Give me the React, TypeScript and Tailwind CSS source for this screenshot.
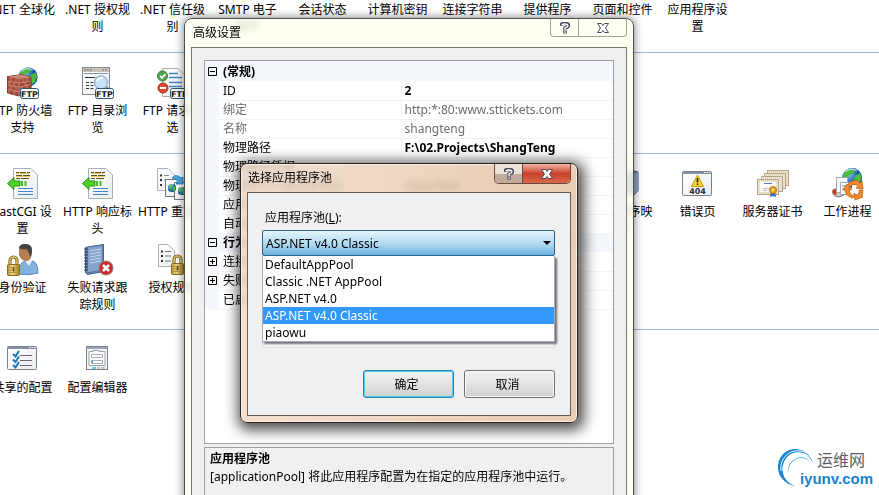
import { useState, type ReactNode } from "react";

const FtpBadge = () => (
  <g>
    <rect x="13.5" y="21.5" width="18" height="10" rx="2" fill="#f6fbff" stroke="#2f5870" />
    <text x="22.5" y="29.5" textAnchor="middle" fontSize="8" fontWeight="700" fill="#111" fontFamily="DejaVu Sans, sans-serif" textRendering="geometricPrecision">
      FTP
    </text>
  </g>
);

const Globe = ({ cx, cy, r }: { cx: number; cy: number; r: number }) => (
  <g transform={`translate(${cx} ${cy}) scale(${r / 10})`}>
    <circle r="10" fill="#1d6fd0" />
    <circle r="10" fill="url(#globeShine)" />
    <path d="M-8-5C-5-10 1-10 3-8L1-4-3-3-4 1-8 2-9-2ZM3-2 8-5 9.500 0 7 6 3 8 1 3ZM-5 4-1 5-1 9-4 8Z" fill="#4dbb3c" />
    <path d="M-7-6A9 9 0 0 1 5-7" stroke="#d7f0ff" strokeWidth="1.500" fill="none" opacity=".7" />
  </g>
);

const Lock = ({ x, y }: { x: number; y: number }) => (
  <g transform={`translate(${x} ${y})`}>
    <path d="M3 9V5a3.500 4 0 0 1 7 0v4" fill="none" stroke="#7f6418" strokeWidth="3.200" />
    <path d="M3 9V5a3.500 4 0 0 1 7 0v4" fill="none" stroke="#ddc271" strokeWidth="1.500" />
    <rect x=".5" y="8.500" width="12" height="11" rx="1" fill="url(#brass)" stroke="#8a6a1b" />
    <path d="M2 11.500h9M2 14h9M2 16.500h9" stroke="#b3913c" />
    <path d="M6.500 11.500v4" stroke="#5a430c" strokeWidth="1.500" />
  </g>
);

const Page = ({ x, y, w, h }: { x: number; y: number; w: number; h: number }) => (
  <g transform={`translate(${x} ${y})`}>
    <path d={`M.5.5H${w - 7}L${w - 0.5} 7V${h - 0.5}H.5Z`} fill="url(#paper)" stroke="#a9b0b6" />
    <path d={`M${w - 7}.5V7H${w - 0.5}Z`} fill="#e3e7ea" stroke="#a9b0b6" />
  </g>
);

const WindowFrame = ({ y, h }: { y: number; h: number }) => (
  <g>
    <rect x=".5" y={y + 0.5} width="29" height={h} rx="1" fill="url(#paper)" stroke="#7d8085" />
    <path d={`M1 ${y + 2}h28`} stroke="#8392ab" strokeWidth="2" />
    <path d={`M22 ${y + 1.5}h1.500m1 0h1.500m1 0h1.500`} stroke="#fff" />
  </g>
);

const ArrowPage = () => (
  <g>
    <Page x={6} y={0} w={25} h={31} />
    <path d="M9 4.500h3m1 0h6m1 0h3M9 7.500h6m1 0h7M9 10.500h4m1 0h8" stroke="#5f5022" strokeWidth="1.200" />
    <path d="M9 5.500h13M9 8.500h14" stroke="#e6c95a" />
    <path d="M.5 15.500 7 9.500V13h6v5H7v3.500Z" fill="#4fd02a" stroke="#279312" />
    <path d="M15 13v5M18.500 13v5" stroke="#43bd25" strokeWidth="2" />
    <path d="M11 20.500h15M11 23.500h15M11 26.500h15" stroke="#4a83c4" />
  </g>
);

const art: Record<string, ReactNode> = {
  firewall: (
    <>
      <Globe cx={21} cy={10} r={9.5} />
      <path d="M.5 9.500 16 7.500l8 3V24L12 29 .5 26Z" fill="#a34a38" stroke="#74372a" />
      <path d="m.5 9.500 15.500-2 8 3-12 1.500Z" fill="#c88772" />
      <path d="M.5 14.500 12 16l12-2M.5 18 12 20l12-2.500M.5 22 12 25l12-3M4 10v5M9 11v5M2 14v4M7 15v5M4 18v5M9 20v5M2 23v4M7 24v4M12 12v17M16 12v4M20 11v4M18 15v4M15 19v5M20 17v5" stroke="#d79b88" strokeWidth=".7" fill="none" />
      <FtpBadge />
    </>
  ),
  browse: (
    <>
      <rect x=".5" y=".5" width="27" height="27" fill="url(#paper)" stroke="#85888d" />
      <path d="M1 3h26" stroke="#c9c5bd" strokeWidth="4" />
      <path d="M2 3h2m1 0h2m1 0h2m10 0h2m1 0h2" stroke="#666" />
      <path d="M2 6.500h24" stroke="#8392ab" />
      <path d="M3 10.500h10M4 15.500h3m1.500 0h3M4 18.500h3m1.500 0h3M4 21.500h3m1.500 0h3" stroke="#333" strokeWidth="1.200" />
      <circle cx="19" cy="15.500" r="6.500" fill="#c4e2f8" stroke="#9fb6ca" strokeWidth="1.500" />
      <path d="M15 14a5 5 0 0 1 6-3" stroke="#fff" strokeWidth="2" fill="none" />
      <path d="m24 20 4 4" stroke="#93969a" strokeWidth="3" />
      <FtpBadge />
    </>
  ),
  filter: (
    <>
      <Page x={5} y={1} w={23} h={29} />
      <path d="M12 6.500h9M12 10.500h13M12 15.500h13M12 19.500h13" stroke="#4a83c4" strokeWidth="1.300" />
      <circle cx="5.500" cy="9" r="5" fill="#4ba548" stroke="#347b38" />
      <path d="m3 9 2 2 3.500-4" stroke="#fff" strokeWidth="1.800" fill="none" />
      <circle cx="6" cy="21" r="5" fill="#e04a2c" stroke="#a62c1c" />
      <path d="M3 21h6" stroke="#fff" strokeWidth="2" />
      <FtpBadge />
    </>
  ),
  arrowPage: <ArrowPage />,
  redirect: (
    <>
      <Page x={0} y={0} w={18} h={23} />
      <path d="M3 7.500h2M3 12h2M3 17h2" stroke="#333" strokeWidth="1.800" />
      <path d="M7 7.500h5M7 12h3" stroke="#888" />
      <path d="M8.500 11.500h15v17h-15Z" fill="url(#paper)" stroke="#6f767d" />
      <path d="M17.500 14.500h15v17h-15Z" fill="url(#paper)" stroke="#6f767d" />
      <Globe cx={15} cy={20} r={4} />
      <Globe cx={25} cy={23} r={4} />
      <path d="M15 10q4-5 9 0l2-1v7h-7l2-2q-2-4-6-4Z" fill="#46a9e4" stroke="#1f78b6" strokeWidth=".8" />
    </>
  ),
  auth: (
    <>
      <path d="M11 30q0-12 8-13l3 1 4-1q5 2 5 12-9 3-20 1Z" fill="#81b2dd" stroke="#5d8cb8" />
      <path d="m18 17 4 5 3-5-3-3h-4Z" fill="#e8f1f8" />
      <path d="M12 5q0-5 6-5 7 0 7 7 0 9-5 10-6 0-8-6Z" fill="#b47e51" />
      <path d="M12 4q1-4 6-4 7 0 7 6 0 5-2 7-1-6-4-8-5 1-7-1Z" fill="#3f4347" />
      <Lock x={0} y={12} />
    </>
  ),
  notebook: (
    <>
      <path d="M3.500 3.500 21.500.5v27l-16 3-2-2Z" fill="#6f91bd" stroke="#3f5c86" />
      <path d="m5 3 16-2v25l-16 3Z" fill="#86a4cb" stroke="#4c6b96" />
      <path d="m8 7 11-2M8 10l11-2M8 13l11-2M8 16l11-2M8 19l11-2" stroke="#c5d5e8" />
      <path d="M2 5h4M2 8h4M2 11h4M2 14h4M2 17h4M2 20h4M2 23h4M2 26h4" stroke="#303a4b" strokeWidth="1.200" />
      <circle cx="24" cy="24" r="7" fill="#cf2a2e" stroke="#8f7c7c" />
      <path d="m21 21 6 6m0-6-6 6" stroke="#fff" strokeWidth="2.600" />
    </>
  ),
  authRules: (
    <>
      <Page x={1} y={0} w={17} h={23} />
      <path d="M4 7.500h2M4 12h2M4 17h2" stroke="#333" strokeWidth="1.800" />
      <path d="M8 7.500h6M8 12h6M8 17h6" stroke="#777" />
      <Lock x={14} y={11} />
    </>
  ),
  shared: (
    <>
      <WindowFrame y={2} h={23} />
      <path d="M13 11.500h12M13 16.500h12M13 21.500h12" stroke="#6b6478" />
      <path d="m6 10 2.500 2.500L12 7M6 15.500 8.500 18l3.500-5.500M6 21l2.500 2.500L12 18" stroke="#1976b9" strokeWidth="2" fill="none" />
    </>
  ),
  editor: (
    <>
      <rect x="4.500" y="2.500" width="21" height="23" fill="#f5f6f7" stroke="#7d8085" />
      <path d="M5 4h20" stroke="#9ba7bd" strokeWidth="2" />
      <path d="M7 7.500h4v-1h6v1h6v14H7Z" fill="#fff" stroke="#9aa0a8" />
      <path d="M9.500 10.500h11v3h-11ZM9.500 16.500h11v3h-11Z" fill="none" stroke="#a5abb3" />
      <path d="M10 18h1" stroke="#18a5c5" strokeWidth="2" />
      <path d="M10 24h4" stroke="#20c4ee" strokeWidth="1.500" />
      <path d="M15 24h3m1 0h4" stroke="#b5b8bc" strokeWidth="1.500" />
    </>
  ),
  server: (
    <>
      <path d="M13 6 27 3l4 1v19l-4 4-14-3Z" fill="#6f84a4" stroke="#43556f" />
      <path d="m27 6 4-2v19l-4 4Z" fill="#8fa3c2" />
    </>
  ),
  error404: (
    <>
      <WindowFrame y={3} h={24} />
      <path d="M15.500 7 21.500 18.500h-12Z" fill="#ffd52b" stroke="#c29b16" strokeLinejoin="round" />
      <path d="M15.500 10v4.500m0 1v1.500" stroke="#222" strokeWidth="1.600" />
      <text x="15.500" y="26" textAnchor="middle" fontSize="8" fontWeight="700" fill="#333" fontFamily="DejaVu Sans, sans-serif" textRendering="geometricPrecision">
        404
      </text>
    </>
  ),
  certs: (
    <>
      {[[10, 2], [7, 5], [4, 8], [0, 11]].map(([x, y]) => (
        <g key={x}>
          <rect x={x + 0.5} y={y + 0.5} width="21" height="15" fill="#f3ead8" stroke="#b5a384" />
          <rect x={x + 2} y={y + 2} width="18" height="12" fill="none" stroke="#cdbd9f" strokeDasharray="1 1" />
        </g>
      ))}
      <rect x="3" y="14" width="16" height="10" fill="#fbf9f3" />
      <path d="M7 15.500h8" stroke="#5b79b4" />
      <path d="M6 20.500h6M6 22.500h4" stroke="#c1bcc0" />
      <path d="m14 23-1 6 3-1 3 1-1-6" fill="#2c6dc4" />
      <circle cx="16" cy="22" r="3.500" fill="#e5a521" stroke="#b37a10" />
      <circle cx="16" cy="22" r="1.400" fill="#ffe18a" />
    </>
  ),
  worker: (
    <>
      <Globe cx={20} cy={10} r={10} />
      <path d="M1 22q3-3 7 2l4 3-5 2q-8-1-6-7Z" fill="#c7c9cb" stroke="#777" />
      <path d="M1 22q2-2 5 1l-2 4q-4-1-3-5Z" fill="#d82b24" />
      <path d="M4.500 9.500h11v15h-11Z" fill="#f4f7fa" stroke="#a5a9ad" />
      <path d="M8.500 14.500h9v12h-9Z" fill="#fff" stroke="#a5a9ad" />
      <path d="M20 17h9v10h-9Z" fill="#fff" />
      <path d="M10 18h5M10 21h3" stroke="#5186bd" />
      <path d="M16 16q7-7 12-1l2-2 1 8-7-1 2-2q-4-4-8 1Z" fill="#f5892b" stroke="#b9590e" strokeWidth=".7" />
      <path d="m11 22 4-6 5 6-3-1q0 5 5 7l-1 2q-8-2-8-8Z" fill="#f5892b" stroke="#b9590e" strokeWidth=".7" />
      <path d="m31 22-1 6 1 1-8 3-1-7 2 2q4-1 3-5Z" fill="#f5892b" stroke="#b9590e" strokeWidth=".7" />
    </>
  ),
};

type Feature = { label: string[]; icon?: string; col?: string };

const sections: Feature[][] = [
  [
    { label: [".NET 全球化"] },
    { label: [".NET 授权规", "则"] },
    { label: [".NET 信任级", "别"] },
    { label: ["SMTP 电子", "邮件"] },
    { label: ["会话状态"] },
    { label: ["计算机密钥"] },
    { label: ["连接字符串"] },
    { label: ["提供程序"] },
    { label: ["页面和控件"] },
    { label: ["应用程序设", "置"] },
  ],
  [
    { label: ["FTP 防火墙", "支持"], icon: "firewall" },
    { label: ["FTP 目录浏", "览"], icon: "browse" },
    { label: ["FTP 请求筛", "选"], icon: "filter" },
  ],
  [
    { label: ["FastCGI 设", "置"], icon: "arrowPage" },
    { label: ["HTTP 响应标", "头"], icon: "arrowPage" },
    { label: ["HTTP 重定向"], icon: "redirect" },
    { label: ["处理程序映", "射"], icon: "server", col: "col-start-9" },
    { label: ["错误页"], icon: "error404" },
    { label: ["服务器证书"], icon: "certs" },
    { label: ["工作进程"], icon: "worker" },
    { label: ["身份验证"], icon: "auth", col: "col-start-1" },
    { label: ["失败请求跟", "踪规则"], icon: "notebook" },
    { label: ["授权规则"], icon: "authRules" },
  ],
  [
    { label: ["共享的配置"], icon: "shared" },
    { label: ["配置编辑器"], icon: "editor" },
  ],
];

type Row = { name: string; value?: string; kind?: "group" | "readonly" | "parent" };

const rows: Row[] = [
  { name: "ID", value: "2" },
  { name: "绑定", value: "http:*:80:www.sttickets.com", kind: "readonly" },
  { name: "名称", value: "shangteng", kind: "readonly" },
  { name: "物理路径", value: "F:\\02.Projects\\ShangTeng" },
  { name: "物理路径凭据" },
  { name: "物理路径凭据登录类型", value: "ClearText" },
  { name: "应用程序池" },
  { name: "自动启动" },
  { name: "行为", kind: "group" },
  { name: "连接限制", kind: "parent" },
  { name: "失败请求跟踪", kind: "parent" },
  { name: "已启用的协议" },
];

const pools = ["DefaultAppPool", "Classic .NET AppPool", "ASP.NET v4.0", "ASP.NET v4.0 Classic", "piaowu"];

function FeatureItem({ item }: { item: Feature }) {
  return (
    <a href="#" className={`flex flex-col items-center gap-[3px] ${item.icon ? "h-[76px]" : ""} ${item.col ?? ""}`}>
      {item.icon && (
        <svg viewBox="0 0 32 32" className="size-8 shrink-0 overflow-visible">
          {art[item.icon]}
        </svg>
      )}
      <span className="whitespace-nowrap text-center">
        {item.label.map((line) => (
          <span key={line} className="block">{line}</span>
        ))}
      </span>
    </a>
  );
}

function Expander({ open, label }: { open: boolean; label: string }) {
  return (
    <button type="button" aria-label={label} className="mx-auto block size-[9px]">
      <svg viewBox="0 0 9 9" className="size-[9px]" fill="none" stroke="#000">
        <path d="M.5.5h8v8h-8ZM2 4.500h5" />
        {!open && <path d="M4.500 2v5" />}
      </svg>
    </button>
  );
}

function HelpGlyph() {
  return (
    <svg viewBox="0 0 10 12" className="h-3 w-2.5" fill="none">
      <path d="M1 4V3q.5-1.500 4-1.500T8.500 3.500Q8.500 5 5 6.200V8.500M5 9v2.500" stroke="#4b4d5c" strokeWidth="3.600" />
      <path d="M2 3.500V3q.5-1 3-1t3 1.500Q8 5 5 6.200V8M5 9.200v1.500" stroke="#fff" strokeWidth="1.400" />
    </svg>
  );
}

function CloseGlyph() {
  return (
    <svg viewBox="0 0 12 10" className="h-2.5 w-3">
      <path d="M.5.5h4L6 2.500 7.500.5h4L8.500 5l3 4.500h-4L6 7.500 4.500 9.500h-4L3.500 5Z" fill="#fff" stroke="#4b4d5c" />
    </svg>
  );
}

function PropertyGrid() {
  return (
    <div className="h-[384px] border border-[#a0a0a0] bg-white">
      <table className="w-full table-fixed border-collapse text-left">
        <colgroup>
          <col className="w-3.5" />
          <col className="w-[182px]" />
          <col />
        </colgroup>
        <tbody>
          <tr className="h-5 bg-[#f4f7fc]">
            <td className="p-0"><Expander open label="(常规)" /></td>
            <th colSpan={2} className="px-1 py-0 font-bold">(常规)</th>
          </tr>
          {rows.map((row) =>
            row.kind === "group" ? (
              <tr key={row.name} className="h-[19px] bg-[#f4f7fc]">
                <td className="p-0"><Expander open label={row.name} /></td>
                <th colSpan={2} className="px-1 py-0 font-bold">{row.name}</th>
              </tr>
            ) : (
              <tr key={row.name} className={`h-[19px] ${row.kind === "readonly" ? "text-[#6d6d6d]" : ""}`}>
                <td className="bg-[#f4f7fc] p-0">
                  {row.kind === "parent" && <Expander open={false} label={row.name} />}
                </td>
                <th className="border-b border-r border-[#f0f4fa] px-1 py-0 font-normal">{row.name}</th>
                <td className={`border-b border-[#f0f4fa] px-[3px] py-0 ${row.kind === "readonly" ? "" : "font-bold"}`}>
                  {row.value}
                </td>
              </tr>
            )
          )}
        </tbody>
      </table>
    </div>
  );
}

function SettingsWindow() {
  return (
    <section
      aria-label="高级设置"
      className="absolute left-[184px] top-[18px] w-[450px] rounded-t-lg border border-[#4d4d49] bg-[#fffff0]/80 px-1.5 shadow-[0_0_9px_1px_rgba(0,0,0,0.45)] backdrop-blur-[3px]"
    >
      <header className="flex h-7 items-start justify-between pl-0.5">
        <h1 className="pt-[5px]">高级设置</h1>
        <div className="flex h-[18px] rounded-b-[4px] border border-t-0 border-[#a3a398]">
          <button type="button" aria-label="帮助" className="flex w-7 items-center justify-center border-r border-[#a3a398]">
            <HelpGlyph />
          </button>
          <button type="button" aria-label="关闭" className="flex w-[47px] items-center justify-center">
            <CloseGlyph />
          </button>
        </div>
      </header>
      <div className="flex flex-col gap-[3px] border border-[#77776f] bg-[#f0f0f0] px-3 pt-3">
        <PropertyGrid />
        <div className="h-16 border border-[#a0a0a0] px-[5px] py-0.5 leading-[18px]">
          <h2 className="font-bold">应用程序池</h2>
          <p>[applicationPool] 将此应用程序配置为在指定的应用程序池中运行。</p>
        </div>
      </div>
    </section>
  );
}

function PoolDialog() {
  const [pool, setPool] = useState("ASP.NET v4.0 Classic");

  return (
    <section
      role="dialog"
      aria-label="选择应用程序池"
      className="absolute left-[240px] top-[163px] w-[338px] rounded-[7px] border border-[#2c2420] bg-linear-to-r from-[#f0dac8]/85 to-[#e6c4a6]/85 px-1.5 pb-1.5 shadow-[2px_3px_14px_4px_rgba(0,0,0,0.7),inset_0_0_0_1px_#fbeee3] backdrop-blur-[3px]"
    >
      <header className="flex h-7 items-start justify-between pl-px">
        <h2 className="pt-[5px]">选择应用程序池</h2>
        <div className="flex h-5 overflow-hidden rounded-b-[5px] border border-t-0 border-[#6a4a40]">
          <button type="button" aria-label="帮助" className="flex w-7 items-center justify-center border-r border-[#6a4a40] bg-linear-to-b from-[#ece2da] from-50% to-[#c0ab9c] to-50%">
            <HelpGlyph />
          </button>
          <button type="button" aria-label="关闭" className="flex w-[47px] items-center justify-center bg-linear-to-b from-[#eeb2a3] via-[#c8402a] via-50% to-[#d9694c]">
            <CloseGlyph />
          </button>
        </div>
      </header>
      <div className="border border-[#6c5d52] bg-[#f0f0f0] pb-[17px] pl-3.5 pr-[15px] pt-4">
        <label htmlFor="pool" className="block px-[3px] leading-[18px]">
          应用程序池(<u>L</u>):
        </label>
        <div className="relative mt-[3px] h-[118px]">
          <select
            id="pool"
            value={pool}
            onChange={(e) => setPool(e.target.value)}
            className="h-[26px] w-full appearance-none rounded-[2px] border border-[#2c628b] bg-linear-to-b from-[#e3f3fc] via-[#b5dcf2] via-50% to-[#6cb3dc] px-[3px] outline-none"
          >
            {pools.map((name) => (
              <option key={name}>{name}</option>
            ))}
          </select>
          <svg viewBox="0 0 8 4" className="pointer-events-none absolute right-1 top-[11px] h-1 w-2">
            <path d="M0 0h8L4 4Z" />
          </svg>
          <div className="absolute inset-x-0 bottom-0 h-4 rounded-b-[3px] border border-[#d5dde5] bg-[#f5f7f9]" />
          <ul role="listbox" aria-label="应用程序池" className="absolute inset-x-0 top-[26px] border border-t-0 border-[#a9abbd] bg-white shadow-[2px_2px_2px_rgba(0,0,0,0.55)]">
            {pools.map((name) => (
              <li
                key={name}
                role="option"
                aria-selected={name === pool}
                onClick={() => setPool(name)}
                className={`px-0.5 ${name === pool ? "bg-[#3399ff] text-white" : ""}`}
              >
                {name}
              </li>
            ))}
          </ul>
        </div>
        <div className="mt-[22px] flex justify-end gap-2.5">
          <button type="button" className="h-7 w-[91px] rounded-[3px] border border-[#2c7fae] bg-linear-to-b from-[#f2f2f2] via-[#e3e3e3] via-50% to-[#cfcfcf] pr-1 shadow-[inset_0_0_0_1px_#48d1f7]">
            确定
          </button>
          <button type="button" className="h-7 w-[91px] rounded-[3px] border border-[#707070] bg-linear-to-b from-[#f2f2f2] via-[#e3e3e3] via-50% to-[#cfcfcf] pr-1 shadow-[inset_0_0_0_1px_#fbfbfb]">
            取消
          </button>
        </div>
      </div>
    </section>
  );
}

function SiteMark() {
  return (
    <a href="#" className="absolute bottom-2 right-1.5 flex items-start">
      <svg viewBox="0 0 37 40" className="-mr-3.5 h-10 w-[37px]">
        <path d="M36 16C31-3 4-3 1 18c-1 11 7 20 18 21C9 36 4 28 6 18 10 2 29 1 36 16Z" fill="#1583d2" />
        <path d="M31 7C17-2 2 9 4 24M34 11C22 0 6 9 6 23" stroke="#fff" fill="none" />
        <path d="M35 16C25 6 11 12 11 27 9 14 24 3 35 16Z" fill="#25a8df" />
      </svg>
      <span className="flex flex-col font-['Liberation_Sans','Noto_Sans_CJK_SC',sans-serif]">
        <span className="pl-[17px] pt-1 text-base leading-5 text-[#5c6066]">运维网</span>
        <span className="text-[15px] font-bold leading-4 text-[#1583d2]">iyunv.com</span>
      </span>
    </a>
  );
}

export default function App() {
  return (
    <main className="relative min-h-screen overflow-hidden bg-white font-['Noto_Sans','Noto_Sans_CJK_SC',sans-serif] text-xs leading-[17px] text-black">
      <svg className="absolute size-0" aria-hidden="true">
        <defs>
          <linearGradient id="paper" x1="0" y1="0" x2="1" y2="1">
            <stop offset="0" stopColor="#fff" />
            <stop offset="1" stopColor="#e9edf0" />
          </linearGradient>
          <linearGradient id="brass">
            <stop offset="0" stopColor="#b78d2d" />
            <stop offset=".4" stopColor="#f0d98b" />
            <stop offset="1" stopColor="#a67c22" />
          </linearGradient>
          <radialGradient id="globeShine" cx=".3" cy=".3">
            <stop offset="0" stopColor="#8fd4ff" />
            <stop offset="1" stopColor="#1250a8" />
          </radialGradient>
        </defs>
      </svg>
      {sections.map((items, i) => (
        <div
          key={i}
          className={`-ml-[15px] grid grid-cols-[repeat(12,75px)] border-[#a5b5da] ${
            i === 0 ? "h-[53px] pt-px" : "pt-3.5"
          } ${i === 2 ? "pb-[9px]" : "pb-2.5"} ${i < 3 ? "border-b" : ""}`}
        >
          {items.map((item) => (
            <FeatureItem key={item.label.join("")} item={item} />
          ))}
        </div>
      ))}
      <SettingsWindow />
      <PoolDialog />
      <SiteMark />
    </main>
  );
}
